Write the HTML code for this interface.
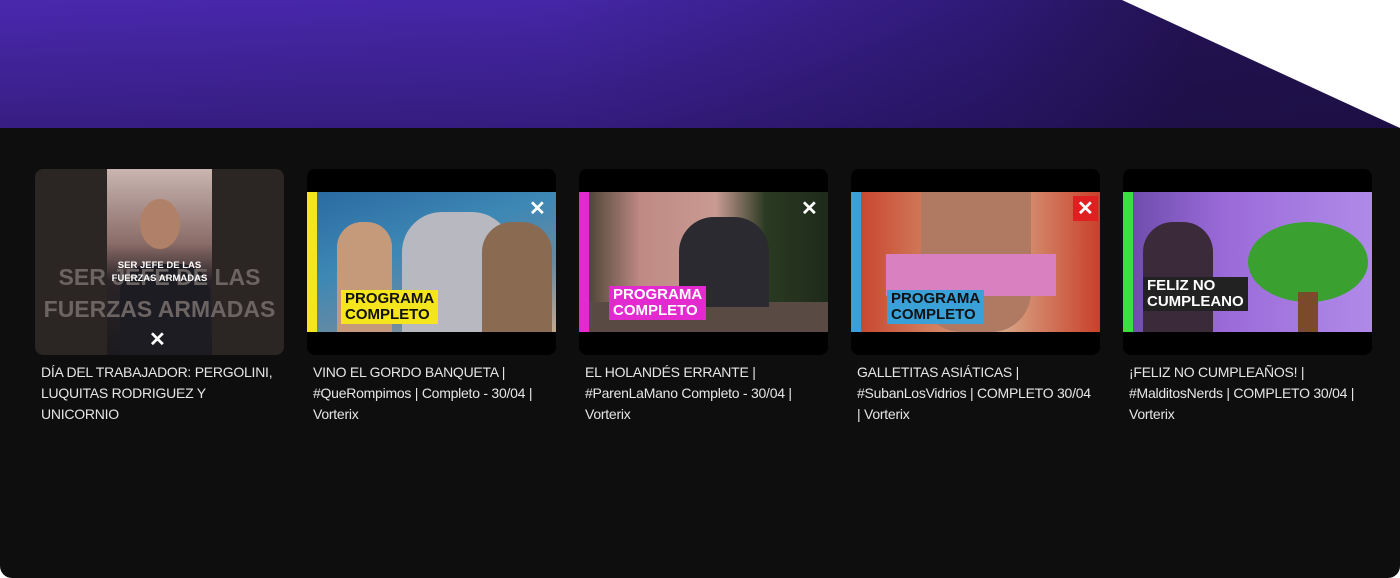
<!DOCTYPE html>
<html><head><meta charset="utf-8"><style>
*{margin:0;padding:0;box-sizing:border-box}
body{width:1400px;height:578px;background:#fff;overflow:hidden;font-family:"Liberation Sans",sans-serif;position:relative}
.top{position:absolute;left:0;top:0;width:1400px;height:128px;background:linear-gradient(180deg,rgba(0,0,0,0) 0%,rgba(20,10,50,.35) 100%),linear-gradient(90deg,#4a28ad 0%,#4526a6 40%,#2f1a78 70%,#231252 85%,#22124f 100%);clip-path:polygon(0 0,1122px 0,1400px 128px,0 128px)}
.panel{position:absolute;left:0;top:128px;width:1400px;height:450px;background:#0e0e0e;border-radius:0 0 12px 12px}
.card{position:absolute;top:169px;width:249px}
.th{height:186px;border-radius:8px;background:#000;overflow:hidden;position:relative}
.img{position:absolute;left:0;top:23px;width:249px;height:140px;overflow:hidden}
.t{color:#e6e6e6;font-size:14px;letter-spacing:-0.25px;line-height:21px;margin-top:7px;padding:0 6px}
.lbl{position:absolute;font-weight:bold;font-size:15px;line-height:16px;color:#111;padding:1px 4px;z-index:2}
.x{position:absolute;color:#fff;font-weight:bold;font-size:20px;z-index:2}
.side{position:absolute;left:0;top:0;width:10px;height:140px;z-index:3}
</style></head><body>
<div class="top"></div>
<div class="panel"></div>

<div class="card" style="left:35px"><div class="th" style="background:#2b2523">
<div style="position:absolute;left:72px;top:0;width:105px;height:186px;background:linear-gradient(180deg,#c9b5b0,#8a6c68 40%,#2a2428 60%,#1c1a1e)"></div>
<div style="position:absolute;left:105px;top:30px;width:40px;height:50px;border-radius:50%;background:#b08068"></div>
<div style="position:absolute;left:85px;top:95px;width:90px;height:91px;border-radius:30px 30px 0 0;background:#1d1c22"></div>
<div style="position:absolute;left:0;top:92px;width:249px;text-align:center;color:#6b6462;font-weight:bold;font-size:23px;line-height:32px">SER JEFE DE LAS<br>FUERZAS ARMADAS</div>
<div style="position:absolute;left:0;top:90px;width:249px;text-align:center;color:#fff;font-weight:bold;font-size:9.5px;line-height:13px">SER JEFE DE LAS<br>FUERZAS ARMADAS</div>
<div class="x" style="left:114px;top:158px">✕</div>
</div><div class="t">DÍA DEL TRABAJADOR: PERGOLINI, LUQUITAS RODRIGUEZ Y UNICORNIO</div></div>

<div class="card" style="left:307px"><div class="th"><div class="img" style="background:linear-gradient(160deg,#2a6aa0,#3d88b5 40%,#6a8aa0 70%,#c5a890)">
<div class="side" style="background:#f4e51c"></div>
<div style="position:absolute;left:30px;top:30px;width:55px;height:110px;background:#c59a7a;border-radius:25px 25px 0 0"></div>
<div style="position:absolute;left:95px;top:20px;width:110px;height:120px;background:#b8b8c0;border-radius:40px 40px 0 0"></div>
<div style="position:absolute;left:175px;top:30px;width:70px;height:110px;background:#8a6a50;border-radius:30px 30px 0 0"></div>
<div class="lbl" style="left:34px;top:98px;background:#f4e51c">PROGRAMA<br>COMPLETO</div>
<div class="x" style="left:222px;top:4px">✕</div></div></div>
<div class="t">VINO EL GORDO BANQUETA | #QueRompimos | Completo - 30/04 | Vorterix</div></div>

<div class="card" style="left:579px"><div class="th"><div class="img" style="background:linear-gradient(90deg,#3a3a2a 0%,#c08a84 25%,#c89a92 55%,#2a3a22 75%,#1e2a1a)">
<div class="side" style="background:#e22ad0"></div>
<div style="position:absolute;left:0;top:110px;width:249px;height:30px;background:#5a4a44"></div>
<div style="position:absolute;left:100px;top:25px;width:90px;height:90px;background:#2a2a30;border-radius:35px 35px 0 0"></div>
<div class="lbl" style="left:30px;top:94px;background:#e22ad0;color:#fff">PROGRAMA<br>COMPLETO</div>
<div class="x" style="left:222px;top:4px">✕</div></div></div>
<div class="t">EL HOLANDÉS ERRANTE | #ParenLaMano Completo - 30/04 | Vorterix</div></div>

<div class="card" style="left:851px"><div class="th"><div class="img" style="background:linear-gradient(90deg,#c8402a,#d07a5a 30%,#d8a888 60%,#c8402a)">
<div class="side" style="background:#39a0d8"></div>
<div style="position:absolute;left:70px;top:0;width:110px;height:140px;background:#b07a62;border-radius:0 0 40px 40px"></div>
<div style="position:absolute;left:35px;top:62px;width:170px;height:42px;background:#d880c0"></div>
<div class="lbl" style="left:36px;top:98px;background:#39a0d8;color:#111">PROGRAMA<br>COMPLETO</div>
<div class="x" style="left:222px;top:4px;background:#e02020;padding:0 4px">✕</div></div></div>
<div class="t">GALLETITAS ASIÁTICAS | #SubanLosVidrios | COMPLETO 30/04 | Vorterix</div></div>

<div class="card" style="left:1123px"><div class="th"><div class="img" style="background:linear-gradient(90deg,#6a4aa8,#9a6ad8 40%,#b08ae8)">
<div class="side" style="background:#3ae040"></div>
<div style="position:absolute;left:20px;top:30px;width:70px;height:110px;background:#3a2a3a;border-radius:30px 30px 0 0"></div>
<div style="position:absolute;left:125px;top:30px;width:120px;height:80px;background:#3aa030;border-radius:50%"></div>
<div style="position:absolute;left:175px;top:100px;width:20px;height:40px;background:#7a4a2a"></div>
<div class="lbl" style="left:20px;top:85px;background:#222;color:#fff">FELIZ NO<br>CUMPLEANO</div></div></div>
<div class="t">¡FELIZ NO CUMPLEAÑOS! | #MalditosNerds | COMPLETO 30/04 | Vorterix</div></div>
</body></html>
